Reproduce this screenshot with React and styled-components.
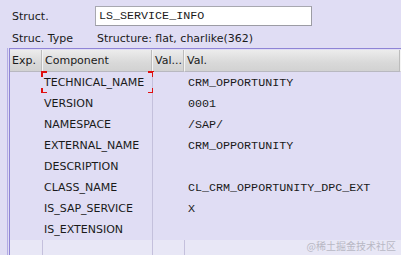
import React from "react";
import styled, { createGlobalStyle } from "styled-components";

const Global = createGlobalStyle`
  html, body { margin: 0; padding: 0; background: #e0ddf4; }
  body { font-family: "DejaVu Sans", Verdana, sans-serif; font-size: 11px; color: #1a1a1a; }
`;

const Page = styled.div`
  position: relative;
  width: 401px;
  height: 255px;
  overflow: hidden;
  background: #e0ddf4;
`;

const Form = styled.div`
  display: grid;
  grid-template-columns: 85px 1fr;
  padding: 5px 0 0 12px;
  row-gap: 1px;
  align-items: center;
`;

const Label = styled.div`
  height: 20px;
  padding-top: 1px;
  line-height: 22px;
`;

const Value = styled.div`
  height: 19px;
  line-height: 21px;
`;

const Input = styled.div`
  width: 212px;
  height: 18px;
  line-height: 18px;
  background: #fff;
  border: 1px solid #a8a8b0;
  border-right-color: #9c9ca4;
  border-bottom-color: #9c9ca4;
  padding-left: 3px;
  font-family: "Liberation Mono", "Courier New", monospace;
  font-size: 11.7px;
  margin-left: -2px;
`;

const Frame = styled.div`
  margin-left: 7px;
  border-left: 1px solid #b3abe4;
  padding-left: 1px;
`;

const Table = styled.div`
  border-top: 1px solid #8f84d6;
  border-left: 1px solid #8f84d6;
  padding-top: 1px;
  display: grid;
  grid-template-columns: 33px 110px 32px 1fr;
`;

const Head = styled.div`
  height: 21px;
  line-height: 22px;
  padding-left: 2px;
  background: linear-gradient(#ececec, #d9d9d9 60%, #d2d2d2);
  border-right: 1px solid #f4f4f4;
  border-bottom: 1px solid #b8b8c0;
  box-shadow: inset -1px 0 0 #bcbcbc;
  white-space: nowrap;
  overflow: hidden;
`;

const Cell = styled.div`
  position: relative;
  height: 21px;
  line-height: 22px;
  padding-left: ${(p) => (p.$mono ? 3 : 1)}px;
  background: ${(p) => (p.$empty ? "#e8e7f6" : "#e0ddf4")};
  border-right: ${(p) => (p.$sep ? "1px solid #c4c0dc" : "none")};
  font-family: ${(p) =>
    p.$mono ? '"Liberation Mono", "Courier New", monospace' : "inherit"};
  font-size: ${(p) => (p.$mono ? "11.7px" : "11px")};
  white-space: nowrap;
`;

const Corner = styled.span`
  position: absolute;
  width: 4px;
  height: 4px;
  border-color: #e01010;
  border-style: solid;
  border-width: 0;
  ${(p) => (p.$t ? "top: -1px; border-top-width: 2px;" : "bottom: -1px; border-bottom-width: 2px;")}
  ${(p) => (p.$l ? "left: -2px; border-left-width: 2px;" : "right: -2px; border-right-width: 2px;")}
`;

const Watermark = styled.div`
  position: absolute;
  right: 5px;
  bottom: 2px;
  font-family: "Noto Sans CJK SC", sans-serif;
  font-size: 10px;
  color: #b8b8c4;
`;

const rows = [
  ["TECHNICAL_NAME", "CRM_OPPORTUNITY"],
  ["VERSION", "0001"],
  ["NAMESPACE", "/SAP/"],
  ["EXTERNAL_NAME", "CRM_OPPORTUNITY"],
  ["DESCRIPTION", ""],
  ["CLASS_NAME", "CL_CRM_OPPORTUNITY_DPC_EXT"],
  ["IS_SAP_SERVICE", "X"],
  ["IS_EXTENSION", ""],
];

export default function App() {
  return (
    <Page>
      <Global />
      <Form>
        <Label>Struct.</Label>
        <Input>LS_SERVICE_INFO</Input>
        <Label>Struc. Type</Label>
        <Value>Structure: flat, charlike(362)</Value>
      </Form>
      <Frame>
        <Table>
          <Head>Exp.</Head>
          <Head>Component</Head>
          <Head>Val...</Head>
          <Head>Val.</Head>
          {rows.map(([c, v], i) => (
            <React.Fragment key={c}>
              <Cell />
              <Cell $sep>
                {c}
                {i === 0 && (
                  <>
                    <Corner $t $l />
                    <Corner $t />
                    <Corner $l />
                    <Corner />
                  </>
                )}
              </Cell>
              <Cell />
              <Cell $mono>{v}</Cell>
            </React.Fragment>
          ))}
          <Cell $empty $sep />
          <Cell $empty $sep />
          <Cell $empty $sep />
          <Cell $empty />
        </Table>
      </Frame>
      <Watermark>@稀土掘金技术社区</Watermark>
    </Page>
  );
}
